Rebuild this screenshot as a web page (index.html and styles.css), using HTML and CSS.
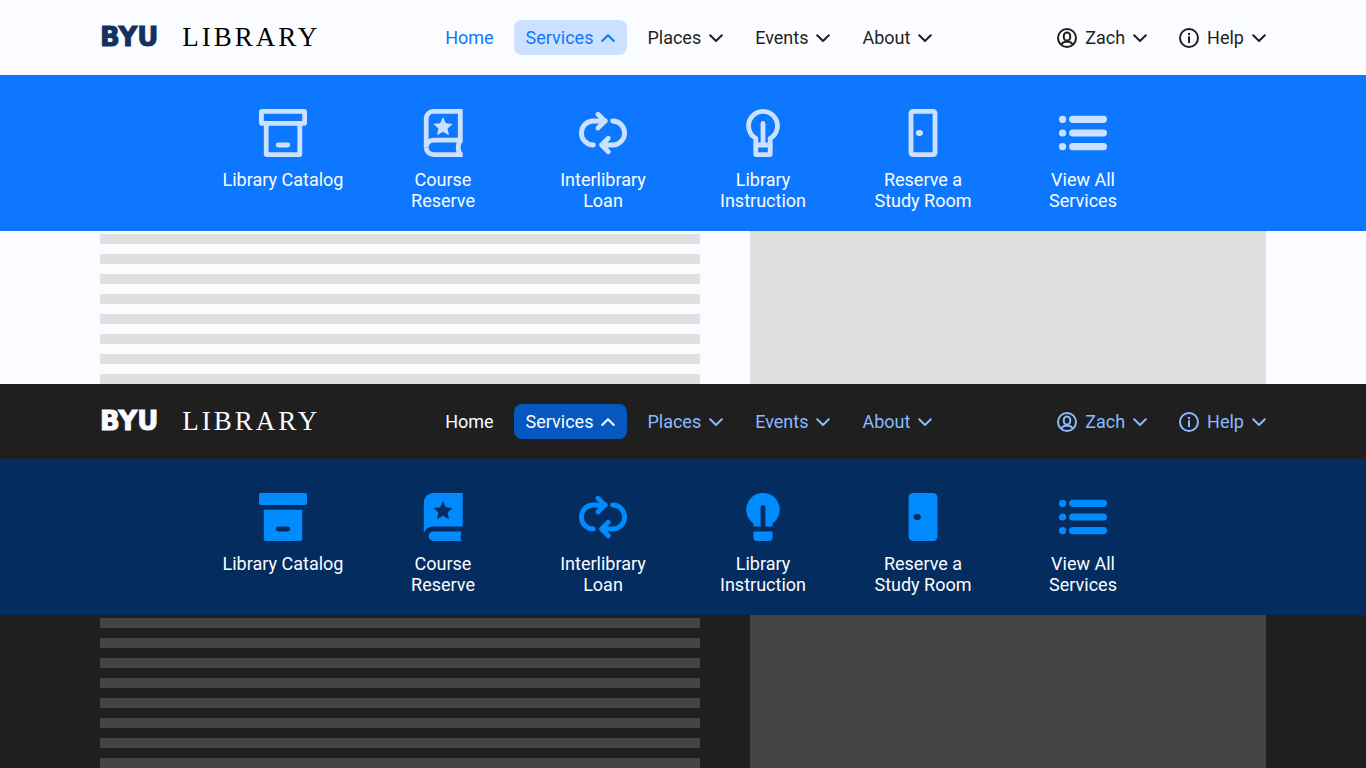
FILE: index.html
```html
<!DOCTYPE html>
<html lang="en">
<head>
<meta charset="utf-8">
<meta name="viewport" content="width=device-width, initial-scale=1">
<title>BYU Library</title>
<link rel="stylesheet" href="styles.css">
</head>
<body>
<svg class="sprite" aria-hidden="true">
  <symbol id="up" viewBox="0 0 14 14"><path class="line" d="M1.2 10 7 4.2 12.8 10"/></symbol>
  <symbol id="down" viewBox="0 0 14 14"><path class="line" d="M1.2 4.2 7 10l5.8-5.8"/></symbol>
  <symbol id="user" viewBox="0 0 20 20"><g class="line"><circle cx="10" cy="10" r="9"/><rect x="6.8" y="4.6" width="6.4" height="8" rx="3.2"/><path d="M4.4 16.4c.8-1.6 2-2.4 3.8-2.6h3.6c1.8.2 3 1 3.8 2.6"/></g></symbol>
  <symbol id="info" viewBox="0 0 20 20"><g class="line"><circle cx="10" cy="10" r="9"/><path d="M10 9v5.2"/></g><circle class="solid" cx="10" cy="6" r="1.2"/></symbol>

  <symbol id="archive" viewBox="0 0 20 20"><g class="line"><rect x="1" y="1" width="18" height="5" rx=".3"/><path d="M3 6v13h14V6"/><path d="M8 15h4"/></g></symbol>
  <symbol id="book" viewBox="0 0 20 20"><g class="line butt"><path d="M18.2 1H6a3 3 0 0 0-3 3v12a3 3 0 0 1 3-3h11.2V1"/><path d="M3 16a3 3 0 0 0 3 3h12.2M17.2 13q-1.8 3 0 6"/></g><path class="solid" d="m10 3.3 1.2 2.6 2.8.3-2.1 1.9.6 2.8-2.5-1.4-2.5 1.4.6-2.8L6 6.2l2.8-.3z"/></symbol>
  <symbol id="loop" viewBox="0 0 20 20"><g class="line"><path d="M6 15a5 5 0 0 1 0-10h5M7.9 2.2 10.8 5 7.9 7.9M14 5a5 5 0 0 1 0 10H9.4M12.2 12.2 9.4 15l2.8 2.8"/></g></symbol>
  <symbol id="bulb" viewBox="0 0 20 20"><g class="line"><path d="M7 19v-6.8a6 6 0 1 1 6 0V19z"/><path d="M10 6v9M7 15h6"/></g></symbol>
  <symbol id="door" viewBox="0 0 20 20"><rect class="line" x="5" y="1" width="10" height="18" rx=".8"/><ellipse class="solid" cx="8.5" cy="10" rx="1.5" ry="1.2"/></symbol>
  <symbol id="list" viewBox="0 0 20 20"><g class="solid"><circle cx="1.5" cy="4.3" r="1.5"/><circle cx="1.5" cy="10" r="1.5"/><circle cx="1.5" cy="15.7" r="1.5"/><rect x="4.2" y="2.8" width="15.8" height="3" rx="1.5"/><rect x="4.2" y="8.5" width="15.8" height="3" rx="1.5"/><rect x="4.2" y="14.2" width="15.8" height="3" rx="1.5"/></g></symbol>

  <symbol id="archive-solid" viewBox="0 0 20 20"><g class="solid"><rect width="20" height="5" rx=".8"/><path d="M2 7h16v12.2a.8.8 0 0 1-.8.8H2.8a.8.8 0 0 1-.8-.8z"/></g><path class="line cut" d="M8 15h4"/></symbol>
  <symbol id="book-solid" viewBox="0 0 20 20"><path class="solid" fill-rule="evenodd" d="M2 4a4 4 0 0 1 4-4h12.2v14H6c-2 0-3.3 1-4 2.9zm8-.7L8.8 5.9 6 6.2l2.1 1.9-.6 2.8L10 9.5l2.5 1.4-.6-2.8L14 6.2l-2.8-.3z"/><path class="solid" d="M6 16h11.8q-1 2 0 4H6a2 2 0 0 1 0-4z"/></symbol>
  <symbol id="bulb-solid" viewBox="0 0 20 20"><path class="solid" d="M6 14v-1.3a7 7 0 1 1 8 0V14h-3V6a1 1 0 0 0-2 0v8zM6 16h8v2.4a1.6 1.6 0 0 1-1.6 1.6H7.6A1.6 1.6 0 0 1 6 18.4z"/></symbol>
  <symbol id="door-solid" viewBox="0 0 20 20"><rect class="solid" x="4" width="12" height="20" rx="1.8"/><ellipse class="hole" cx="7.6" cy="10" rx="1.5" ry="1.2"/></symbol>
</svg>

<section class="theme light">
  <header class="bar">
    <a class="logo" href="#"><span class="logo-byu">BYU</span><span class="logo-library">LIBRARY</span></a>
    <nav class="menu" aria-label="Main">
      <a class="item current" href="#">Home</a>
      <button class="item open" type="button" aria-expanded="true">Services<svg class="chevron"><use href="#up"/></svg></button>
      <button class="item" type="button">Places<svg class="chevron"><use href="#down"/></svg></button>
      <button class="item" type="button">Events<svg class="chevron"><use href="#down"/></svg></button>
      <button class="item" type="button">About<svg class="chevron"><use href="#down"/></svg></button>
    </nav>
    <div class="menu">
      <button class="item" type="button"><svg class="glyph"><use href="#user"/></svg>Zach<svg class="chevron"><use href="#down"/></svg></button>
      <button class="item" type="button"><svg class="glyph"><use href="#info"/></svg>Help<svg class="chevron"><use href="#down"/></svg></button>
    </div>
  </header>
  <nav class="services" aria-label="Services">
    <a class="service" href="#"><svg class="icon"><use href="#archive"/></svg><span>Library Catalog</span></a>
    <a class="service" href="#"><svg class="icon"><use href="#book"/></svg><span>Course<br>Reserve</span></a>
    <a class="service" href="#"><svg class="icon"><use href="#loop"/></svg><span>Interlibrary<br>Loan</span></a>
    <a class="service" href="#"><svg class="icon"><use href="#bulb"/></svg><span>Library<br>Instruction</span></a>
    <a class="service" href="#"><svg class="icon"><use href="#door"/></svg><span>Reserve a<br>Study Room</span></a>
    <a class="service" href="#"><svg class="icon"><use href="#list"/></svg><span>View All<br>Services</span></a>
  </nav>
  <main class="content">
    <div class="lines"><i></i><i></i><i></i><i></i><i></i><i></i><i></i><i></i></div>
    <div class="block"></div>
  </main>
</section>

<section class="theme dark">
  <header class="bar">
    <a class="logo" href="#"><span class="logo-byu">BYU</span><span class="logo-library">LIBRARY</span></a>
    <nav class="menu" aria-label="Main, dark">
      <a class="item current" href="#">Home</a>
      <button class="item open" type="button" aria-expanded="true">Services<svg class="chevron"><use href="#up"/></svg></button>
      <button class="item" type="button">Places<svg class="chevron"><use href="#down"/></svg></button>
      <button class="item" type="button">Events<svg class="chevron"><use href="#down"/></svg></button>
      <button class="item" type="button">About<svg class="chevron"><use href="#down"/></svg></button>
    </nav>
    <div class="menu">
      <button class="item" type="button"><svg class="glyph"><use href="#user"/></svg>Zach<svg class="chevron"><use href="#down"/></svg></button>
      <button class="item" type="button"><svg class="glyph"><use href="#info"/></svg>Help<svg class="chevron"><use href="#down"/></svg></button>
    </div>
  </header>
  <nav class="services" aria-label="Services, dark">
    <a class="service" href="#"><svg class="icon"><use href="#archive-solid"/></svg><span>Library Catalog</span></a>
    <a class="service" href="#"><svg class="icon"><use href="#book-solid"/></svg><span>Course<br>Reserve</span></a>
    <a class="service" href="#"><svg class="icon"><use href="#loop"/></svg><span>Interlibrary<br>Loan</span></a>
    <a class="service" href="#"><svg class="icon"><use href="#bulb-solid"/></svg><span>Library<br>Instruction</span></a>
    <a class="service" href="#"><svg class="icon"><use href="#door-solid"/></svg><span>Reserve a<br>Study Room</span></a>
    <a class="service" href="#"><svg class="icon"><use href="#list"/></svg><span>View All<br>Services</span></a>
  </nav>
  <div class="content">
    <div class="lines"><i></i><i></i><i></i><i></i><i></i><i></i><i></i><i></i></div>
    <div class="block"></div>
  </div>
</section>
</body>
</html>
```
FILE: styles.css
```css
* { box-sizing: border-box; }

body {
  margin: 0;
  font: 18px/21px Roboto, "Liberation Sans", sans-serif;
}

a { color: inherit; text-decoration: none; }

.sprite { display: none; }

.light {
  --page: #fafcff;
  --text: #1f1f1f;
  --byu: #14315f;
  --library: #000;
  --current: #0d78ff;
  --open-bg: #cce1ff;
  --open-text: #0d78ff;
  --band: #0d78ff;
  --band-text: #fafcff;
  --icon: #cce1ff;
  --shape: #e0e0e0;
}

.dark {
  --page: #1f1f1f;
  --text: #8abaff;
  --byu: #fafcff;
  --library: #fafcff;
  --current: #fafcff;
  --open-bg: #0657bf;
  --open-text: #fafcff;
  --band: #042c5f;
  --band-text: #fafcff;
  --icon: #008cff;
  --shape: #444;
}

.theme {
  display: flex;
  flex-direction: column;
  min-height: 50vh;
  background: var(--page);
  color: var(--text);
}

.bar {
  display: flex;
  align-items: center;
  justify-content: space-between;
  padding: 20px 100px;
}

.logo {
  display: flex;
  align-items: center;
  gap: 24px;
  height: 35px;
}

.logo-byu {
  color: var(--byu);
  font-family: "DejaVu Sans", sans-serif;
  font-size: 26px;
  font-weight: 700;
  -webkit-text-stroke: 1px var(--byu);
}

.logo-library {
  color: var(--library);
  font-family: "Liberation Serif", serif;
  font-size: 27px;
  letter-spacing: 3px;
}

.menu {
  display: flex;
  gap: 8px;
  margin: 0 -12px;
}

.item {
  display: flex;
  align-items: center;
  gap: 8px;
  padding: 7px 12px;
  border: 0;
  border-radius: 8px;
  background: none;
  color: inherit;
  font: inherit;
  cursor: pointer;
}

.current { color: var(--current); }

.open {
  background: var(--open-bg);
  color: var(--open-text);
}

.chevron { width: 14px; height: 14px; }
.glyph { width: 20px; height: 20px; }

.services {
  display: flex;
  justify-content: center;
  padding: 34px 20px 20px;
  background: var(--band);
  color: var(--band-text);
}

.service {
  display: flex;
  flex-direction: column;
  align-items: center;
  gap: 12px;
  width: 160px;
  text-align: center;
}

.icon {
  width: 48px;
  height: 48px;
  color: var(--icon);
}

.line {
  fill: none;
  stroke: currentColor;
  stroke-width: 2;
  stroke-linecap: round;
  stroke-linejoin: round;
}

.butt { stroke-linecap: butt; stroke-linejoin: miter; }
.solid { fill: currentColor; }
.cut { stroke: var(--band); }
.hole { fill: var(--band); }

.content {
  display: grid;
  grid-template-columns: 600fr 516fr;
  gap: 50px;
  flex: 1;
  padding: 0 100px;
}

.lines {
  display: flex;
  flex-direction: column;
  gap: 10px;
  padding-top: 3px;
}

.lines i {
  height: 10px;
  background: var(--shape);
}

.block { background: var(--shape); }
```
